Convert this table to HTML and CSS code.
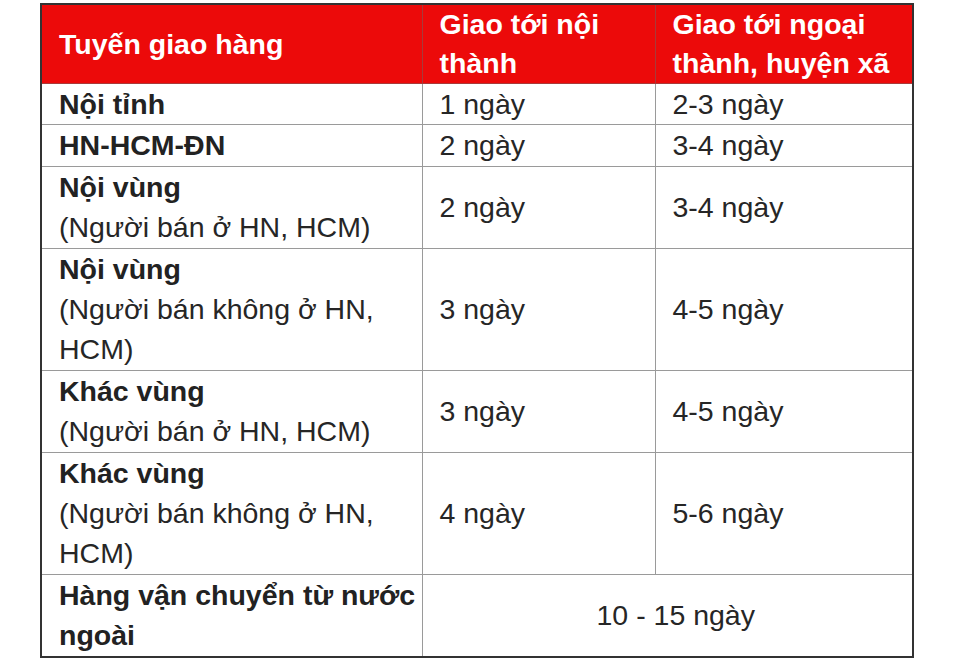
FILE: index.html
```html
<!DOCTYPE html>
<html lang="vi">
<head>
<meta charset="utf-8">
<title>Tuyến giao hàng</title>
<link rel="stylesheet" href="styles.css">
</head>
<body>
<table class="ship">
  <colgroup>
    <col class="c1">
    <col class="c2">
    <col class="c3">
  </colgroup>
  <thead>
    <tr>
      <th>Tuyến giao hàng</th>
      <th>Giao tới nội<br>thành</th>
      <th>Giao tới ngoại<br>thành, huyện xã</th>
    </tr>
  </thead>
  <tbody>
    <tr>
      <td><b>Nội tỉnh</b></td>
      <td>1 ngày</td>
      <td>2-3 ngày</td>
    </tr>
    <tr>
      <td><b>HN-HCM-ĐN</b></td>
      <td>2 ngày</td>
      <td>3-4 ngày</td>
    </tr>
    <tr>
      <td><b>Nội vùng</b><br>(Người bán ở HN, HCM)</td>
      <td>2 ngày</td>
      <td>3-4 ngày</td>
    </tr>
    <tr>
      <td><b>Nội vùng</b><br>(Người bán không ở HN,<br>HCM)</td>
      <td>3 ngày</td>
      <td>4-5 ngày</td>
    </tr>
    <tr>
      <td><b>Khác vùng</b><br>(Người bán ở HN, HCM)</td>
      <td>3 ngày</td>
      <td>4-5 ngày</td>
    </tr>
    <tr>
      <td><b>Khác vùng</b><br>(Người bán không ở HN,<br>HCM)</td>
      <td>4 ngày</td>
      <td>5-6 ngày</td>
    </tr>
    <tr>
      <td><b>Hàng vận chuyển từ nước<br>ngoài</b></td>
      <td class="span" colspan="2">10 - 15 ngày</td>
    </tr>
  </tbody>
</table>
</body>
</html>
```

FILE: styles.css
```css
html, body {
  margin: 0;
  padding: 0;
  background: #ffffff;
}

body {
  font-family: "Liberation Sans", Arial, sans-serif;
  color: #262626;
}

.ship {
  margin: 3px 0 0 40px;
  width: 872px;
  table-layout: fixed;
  border-collapse: collapse;
  border: 2px solid #333333;
  font-size: 28.5px;
  line-height: 40.4px;
}

.c1 { width: 381px; }
.c2 { width: 233px; }
.c3 { width: 258px; }

.ship th,
.ship td {
  border: 1px solid #9a9a9a;
  padding: 0 0 0 17px;
  text-align: left;
  vertical-align: middle;
}

.ship th {
  background: #ec0a0a;
  color: #ffffff;
  font-weight: bold;
  line-height: 39px;
  border-color: #a83a3a;
}

.ship td b {
  font-weight: bold;
  color: #222222;
}

.ship td.span {
  text-align: center;
}
```
